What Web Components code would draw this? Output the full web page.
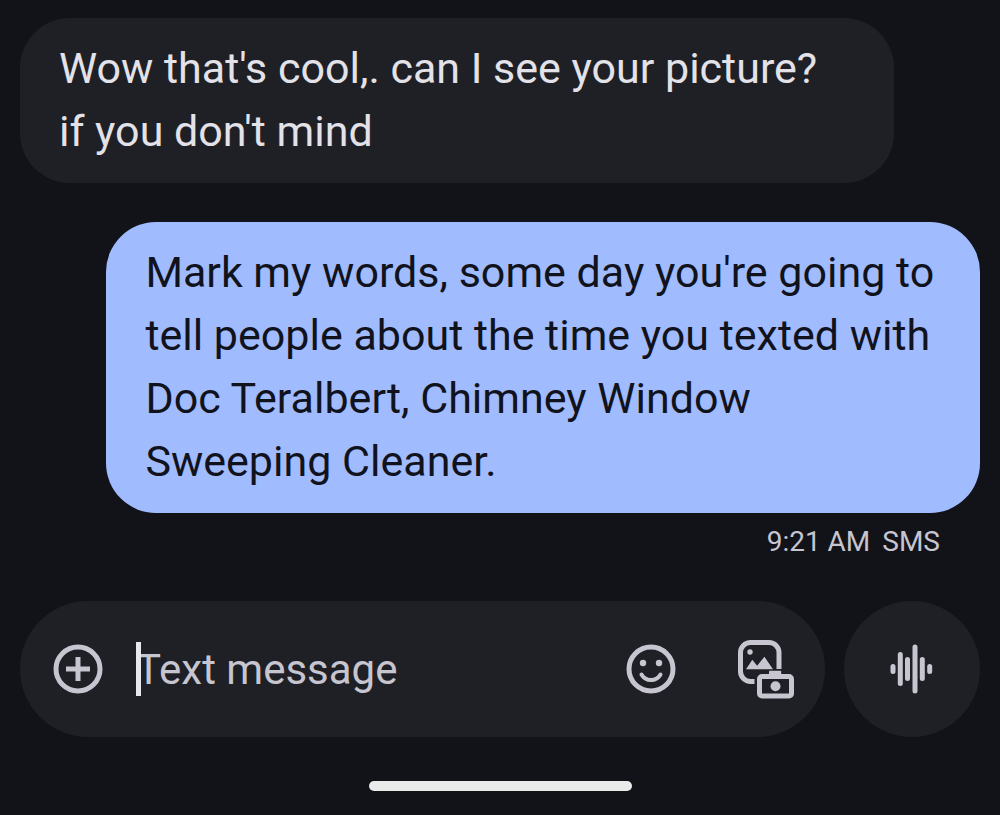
<!DOCTYPE html>
<html lang="en">
<head>
<meta charset="utf-8">
<meta name="viewport" content="width=device-width, initial-scale=1">
<title>Messages</title>
<style>
  html { background: #121318; }
  body {
    margin: 0;
    color: #e3e2e9;
    font-family: Roboto, "Liberation Sans", sans-serif;
    font-size: 43px;
    line-height: 63px;
  }
</style>
</head>
<body>
<chat-screen>
  <chat-bubble>Wow that's cool,. can I see your picture? if you don't mind</chat-bubble>
  <chat-bubble sent>Mark my words, some day you're going to tell people about the time you texted with Doc Teralbert, Chimney Window Sweeping Cleaner.</chat-bubble>
  <message-status><span>9:21 AM</span><span>SMS</span></message-status>
  <message-composer slot="footer"></message-composer>
  <gesture-bar slot="footer"></gesture-bar>
</chat-screen>

<script>
  const define = (name, html) => {
    const template = document.createElement('template');
    template.innerHTML = html;
    customElements.define(name, class extends HTMLElement {
      constructor() {
        super();
        this.attachShadow({ mode: 'open' }).append(template.content.cloneNode(true));
      }
    });
  };

  define('chat-screen', `
    <style>
      :host { display: flex; flex-direction: column; min-height: 100vh; box-sizing: border-box; padding: 18px 20px 24px; }
      main { display: flex; flex-direction: column; flex: 1; }
      footer { display: flex; flex-direction: column; gap: 44px; }
    </style>
    <main><slot></slot></main>
    <footer><slot name="footer"></slot></footer>
  `);

  define('chat-bubble', `
    <style>
      :host {
        display: block; box-sizing: border-box; max-width: 91%;
        align-self: flex-start; margin-bottom: 39px;
        padding: 19px 43px 20px 39px; border-radius: 50px;
        background: #1f2025; color: #e3e2e9;
      }
      :host([sent]) { align-self: flex-end; margin-bottom: 8px; background: #a1bbff; color: #11131c; }
      p { margin: 0; }
    </style>
    <p><slot></slot></p>
  `);

  define('message-status', `
    <style>
      :host {
        display: flex; justify-content: flex-end; gap: 12px;
        padding-right: 40px; color: #c6c5d0; font-size: 28px; line-height: 42px;
      }
    </style>
    <slot></slot>
  `);

  define('round-action', `
    <style>
      :host { display: block; flex: none; }
      button {
        display: flex; align-items: center; justify-content: center;
        width: 60px; height: 60px; padding: 0; border: 0; border-radius: 50%;
        background: none; color: inherit;
      }
      :host([filled]) button { width: 136px; height: 136px; background: #1f2025; }
    </style>
    <button type="button"><slot></slot></button>
  `);

  define('message-composer', `
    <style>
      :host { display: flex; gap: 19px; color: #c6c5d0; }
      form {
        display: flex; align-items: center; flex: 1; min-width: 0; box-sizing: border-box;
        height: 136px; padding: 0 28px; border-radius: 68px; background: #1f2025;
      }
      .field { position: relative; flex: 1; min-width: 0; margin: 0 20px 0 28px; display: flex; }
      input {
        width: 100%; min-width: 0; height: 64px; padding: 0; border: 0; outline: 0;
        background: none; color: #e3e2e9; font: inherit; font-size: 42px;
      }
      input::placeholder { color: #c6c5d0; opacity: 1; }
      .caret { position: absolute; left: 0; top: 5px; width: 5px; height: 54px; background: #e8e7ee; }
      .tools { display: flex; gap: 56px; }
      svg { display: block; }
    </style>
    <form>
      <round-action>
        <svg width="50" height="50" viewBox="0 0 50 50" role="img" aria-label="Add attachment" fill="none" stroke="currentColor" stroke-width="5">
          <circle cx="25" cy="25" r="22"/><path d="M25 13v24M13 25h24"/>
        </svg>
      </round-action>
      <label class="field">
        <input type="text" placeholder="Text message" aria-label="Text message">
        <span class="caret"></span>
      </label>
      <div class="tools">
        <round-action>
          <svg width="50" height="50" viewBox="0 0 50 50" role="img" aria-label="Emoji" fill="none" stroke="currentColor">
            <circle cx="25" cy="25" r="22" stroke-width="5"/>
            <g fill="currentColor" stroke="none"><circle cx="17" cy="19" r="3.2"/><circle cx="33" cy="19" r="3.2"/></g>
            <path d="M15.500 30.500q3 5.500 9.500 5.500t9.500-5.500" stroke-width="4" stroke-linecap="round"/>
          </svg>
        </round-action>
        <round-action>
          <svg width="58" height="60" viewBox="0 -1 58 60" role="img" aria-label="Gallery and camera" fill="none" stroke="currentColor">
            <path d="M16.500 41.500H12.500a10 10 0 0 1-10-10V12.500a10 10 0 0 1 10-10H31a10 10 0 0 1 10 10V29" stroke-width="5"/>
            <circle cx="12" cy="12" r="2.700" fill="currentColor" stroke="none"/>
            <path d="M8 29.200l6.300-9.500 4.800 6 7.300-9 8.600 12.500z" fill="currentColor" stroke="none"/>
            <rect x="21.500" y="36.500" width="32" height="19.500" rx="2.500" stroke-width="5"/>
            <path d="M31 35v-3.500q0-.7.700-.7h10.800q.7 0 .7.700V35z" fill="currentColor" stroke="none"/>
            <circle cx="37.500" cy="46.200" r="5" fill="currentColor" stroke="none"/>
          </svg>
        </round-action>
      </div>
    </form>
    <round-action filled>
      <svg width="50" height="50" viewBox="0 0 50 50" role="img" aria-label="Record voice message" fill="none" stroke="currentColor" stroke-width="5" stroke-linecap="round">
        <path d="M6 22.500v5M13.300 10.500v29M20.500 15.500v19M28 3v44M35.300 15.500v19M42.700 22.500v5"/>
      </svg>
    </round-action>
  `);

  define('gesture-bar', `
    <style>
      :host { display: flex; justify-content: center; }
      div { width: 263px; height: 10px; border-radius: 5px; background: #e9ebea; }
    </style>
    <div></div>
  `);
</script>
</body>
</html>
